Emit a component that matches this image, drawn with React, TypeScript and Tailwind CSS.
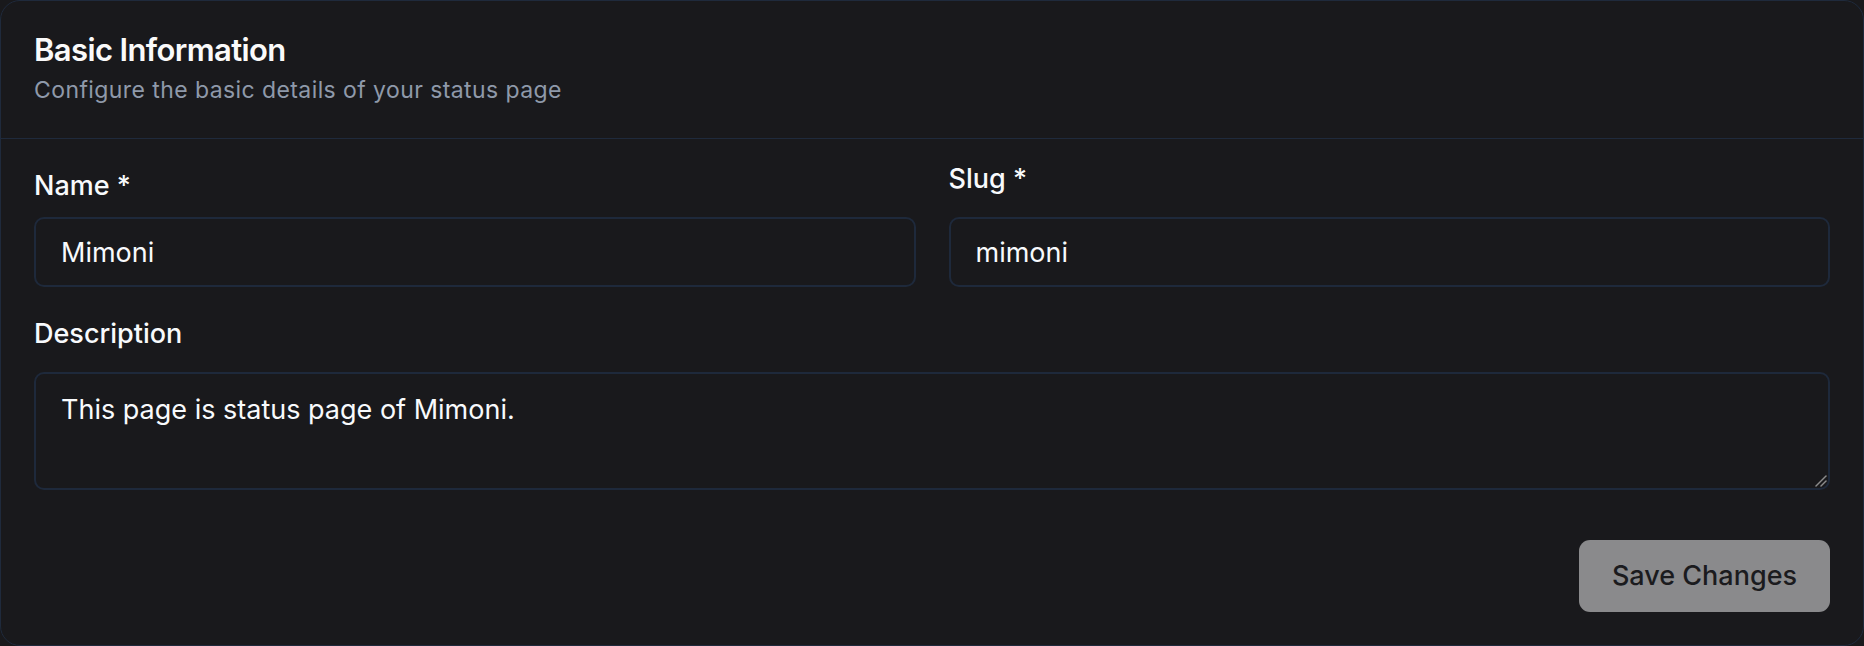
export default function App() {
  return (
    <div className="min-h-[646px] w-full bg-[#19191c] font-['Inter','Liberation_Sans',sans-serif] [color-scheme:dark]">
      <div className="flex h-[646px] flex-col rounded-[20px] border-[1.5px] border-[#1f2a3c] bg-[#19191c]">
        {/* header */}
        <div className="border-b-[1.5px] border-[#1f2a3c] px-[33px] pt-[33px] pb-[32px]">
          <h2 className="text-[31px] leading-[31px] font-semibold tracking-[-0.02em] text-[#fafafa]">
            Basic Information
          </h2>
          <p className="mt-[9px] text-[23px] leading-[32px] tracking-[0.018em] text-[#8f99aa]">
            Configure the basic details of your status page
          </p>
        </div>

        {/* form */}
        <form className="flex flex-1 flex-col px-[33px] pt-[24px] pb-[33px]">
          <div className="grid grid-cols-2 gap-x-[33px]">
            <div className="flex flex-col pt-[7px]">
              <label className="mb-[15px] text-[27px] leading-[32px] font-medium text-[#f8fafc]">
                Name *
              </label>
              <input
                defaultValue="Mimoni"
                className="h-[70px] rounded-[10px] border-2 border-[#1e293b] bg-transparent px-[25px] text-[27px] text-[#f8fafc] outline-none"
              />
            </div>
            <div className="flex flex-col">
              <label className="mb-[22px] text-[27px] leading-[32px] font-medium text-[#f8fafc]">
                Slug *
              </label>
              <input
                defaultValue="mimoni"
                className="h-[70px] rounded-[10px] border-2 border-[#1e293b] bg-transparent px-[25px] text-[27px] text-[#f8fafc] outline-none"
              />
            </div>
          </div>

          <label className="mt-[31px] mb-[22px] text-[27px] leading-[32px] font-medium text-[#f8fafc]">
            Description
          </label>
          <div className="relative">
            <textarea
              defaultValue="This page is status page of Mimoni."
              className="block h-[118px] w-full resize-none rounded-[10px] border-2 border-[#1e293b] bg-transparent px-[25px] py-[20px] text-[27px] leading-[32px] text-[#f8fafc] outline-none"
            />
            {/* resize grip */}
            <svg
              className="pointer-events-none absolute right-[3px] bottom-[3px] h-[12px] w-[12px]"
              viewBox="0 0 12 12"
              fill="none"
              stroke="#8c8c8c"
              strokeWidth="1.5"
              strokeLinecap="round"
            >
              <path d="M11 1 L1 11" />
              <path d="M11 6 L6 11" />
            </svg>
          </div>

          <div className="mt-auto flex justify-end">
            <button
              type="button"
              className="h-[72px] w-[251px] rounded-[11px] bg-[#8a8a8c] text-[27px] font-medium text-[#1b1b1e]"
            >
              Save Changes
            </button>
          </div>
        </form>
      </div>
    </div>
  );
}
